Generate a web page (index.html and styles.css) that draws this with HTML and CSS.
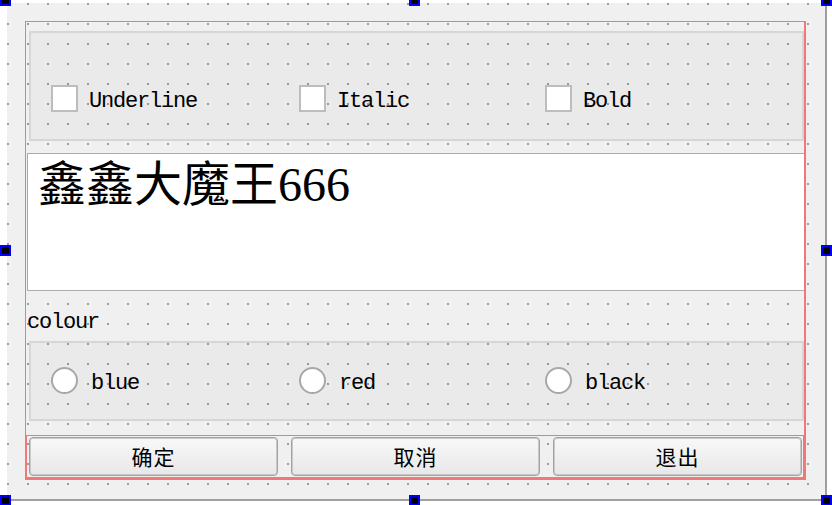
FILE: index.html
```html
<!DOCTYPE html>
<html>
<head>
<meta charset="utf-8">
<link rel="stylesheet" href="styles.css">
</head>
<body>
<div class="form">
  <div class="vlayout">
    <div class="group group-checks">
      <div class="opt"><span class="checkbox"></span><span class="opt-text">Underline</span></div>
      <div class="opt"><span class="checkbox"></span><span class="opt-text">Italic</span></div>
      <div class="opt"><span class="checkbox"></span><span class="opt-text">Bold</span></div>
    </div>
    <div class="textedit">鑫鑫大魔王666</div>
    <div class="caption">colour</div>
    <div class="group group-radios">
      <div class="opt"><span class="radio"></span><span class="opt-text radio-text">blue</span></div>
      <div class="opt"><span class="radio"></span><span class="opt-text radio-text">red</span></div>
      <div class="opt"><span class="radio"></span><span class="opt-text radio-text">black</span></div>
    </div>
    <div class="buttons">
      <button class="btn">确定</button>
      <button class="btn">取消</button>
      <button class="btn">退出</button>
    </div>
  </div>
</div>
<div class="handle h-left h-top"></div>
<div class="handle h-mid h-top"></div>
<div class="handle h-right h-top"></div>
<div class="handle h-left h-vmid"></div>
<div class="handle h-right h-vmid"></div>
<div class="handle h-left h-bottom"></div>
<div class="handle h-mid h-bottom"></div>
<div class="handle h-right h-bottom"></div>
</body>
</html>
```

FILE: styles.css
```css
html, body {
  margin: 0;
  background: #ffffff;
}
body {
  position: relative;
  width: 832px;
  height: 505px;
  box-sizing: border-box;
  padding: 3px 0 0 7px;
  overflow: hidden;
  font-family: "Liberation Mono", "DejaVu Sans Mono", monospace;
  color: #000;
}
.form {
  width: 818px;
  height: 496px;
  box-sizing: border-box;
  padding: 18px;
  background-color: #f0f0f0;
  background-image: conic-gradient(from 270deg at 2px 2px, #9c9c9c 90deg, transparent 0);
  background-size: 20px 20px;
  box-shadow: 2px 2px 0 #a0a0a0;
}
.vlayout {
  width: 781px;
  height: 459px;
  box-sizing: border-box;
  border: 1px solid #f27878;
  border-right-width: 2px;
  display: flex;
  flex-direction: column;
}
.group {
  margin-left: 3px;
  width: 775px;
  box-sizing: border-box;
  border: 2px solid #d6d6d6;
  background: rgba(0, 0, 0, 0.022);
  display: grid;
  grid-template-columns: 248px 246px 1fr;
  align-items: start;
  padding-left: 20px;
}
.group-checks {
  margin-top: 9px;
  height: 110px;
  padding-top: 52px;
}
.group-radios {
  margin-top: 5px;
  height: 80px;
  padding-top: 24px;
}
.opt {
  display: flex;
  align-items: flex-start;
}
.checkbox {
  width: 27px;
  height: 27px;
  box-sizing: border-box;
  border: 2px solid #bdbdbd;
  background: #fff;
  flex: none;
}
.radio {
  width: 27px;
  height: 27px;
  box-sizing: border-box;
  border: 2px solid #a8a8a8;
  border-radius: 50%;
  background: #fff;
  flex: none;
}
.opt-text {
  margin-left: 11px;
  margin-top: 4px;
  font-size: 22px;
  line-height: 26px;
  letter-spacing: -1.2px;
  white-space: nowrap;
}
.opt-text.radio-text {
  margin-left: 13px;
}
.textedit {
  margin-top: 12px;
  margin-left: 1px;
  width: 777px;
  height: 138px;
  box-sizing: border-box;
  border: 1px solid #acacac;
  border-right: none;
  background: #fff;
  padding: 7px 0 0 10px;
  font-family: "Liberation Serif", "Noto Sans CJK SC", serif;
  font-size: 48px;
  line-height: 48px;
  white-space: nowrap;
}
.caption {
  margin-top: 19px;
  margin-left: 1px;
  height: 26px;
  font-size: 22px;
  line-height: 26px;
  letter-spacing: -1.2px;
}
.buttons {
  margin-top: 14px;
  width: 778px;
  height: 44px;
  box-sizing: border-box;
  border: 1px solid #f27878;
  border-bottom-width: 2px;
  padding: 1px 1px 1px 2px;
  display: flex;
  gap: 13px;
}
.btn {
  width: 249px;
  height: 39px;
  margin: 0;
  padding: 0;
  box-sizing: border-box;
  border: 1px solid #a2a2a2;
  border-radius: 4px;
  box-shadow: inset 0 0 0 1px #cacaca;
  background: linear-gradient(#f9f9f9, #e7e7e7);
  font-family: "Noto Sans CJK SC", sans-serif;
  font-size: 21px;
  line-height: 37px;
  color: #000;
  letter-spacing: 1px;
}
.handle {
  position: absolute;
  width: 11px;
  height: 11px;
  box-sizing: border-box;
  border: 2px solid #0000ff;
  background: #000;
}
.h-left { left: 0; }
.h-mid { left: 409px; }
.h-right { left: 821px; }
.h-top { top: -5px; }
.h-vmid { top: 245px; }
.h-bottom { top: 495px; }
```
